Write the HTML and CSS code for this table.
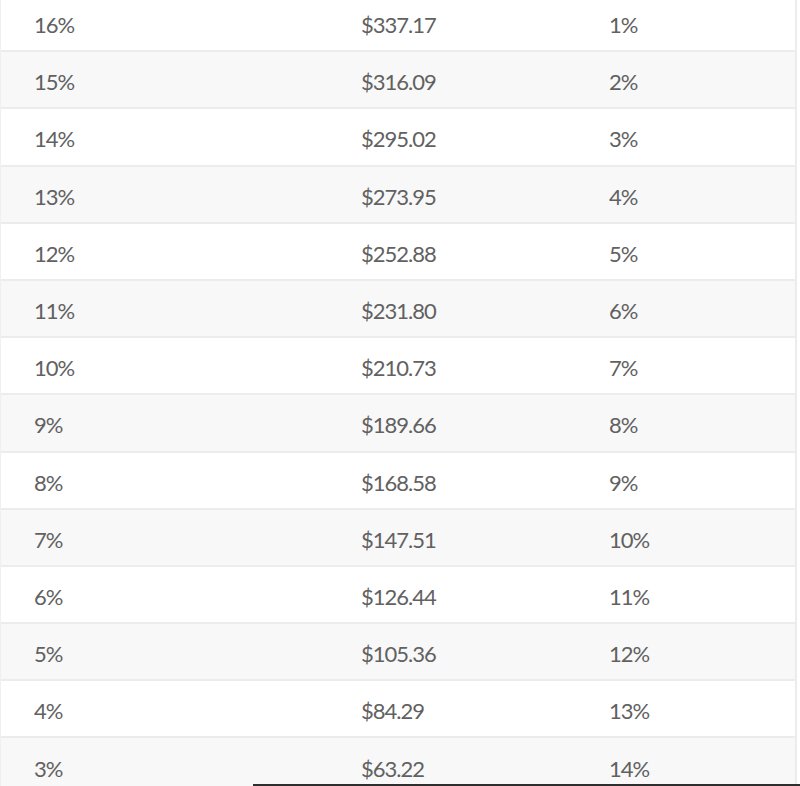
FILE: index.html
```html
<!DOCTYPE html>
<html>
<head>
<meta charset="utf-8">
<link rel="stylesheet" href="styles.css">
</head>
<body>
<div class="table">
  <div class="row"><span class="c1">16%</span><span class="c2">$337.17</span><span class="c3">1%</span></div>
  <div class="row alt"><span class="c1">15%</span><span class="c2">$316.09</span><span class="c3">2%</span></div>
  <div class="row"><span class="c1">14%</span><span class="c2">$295.02</span><span class="c3">3%</span></div>
  <div class="row alt"><span class="c1">13%</span><span class="c2">$273.95</span><span class="c3">4%</span></div>
  <div class="row"><span class="c1">12%</span><span class="c2">$252.88</span><span class="c3">5%</span></div>
  <div class="row alt"><span class="c1">11%</span><span class="c2">$231.80</span><span class="c3">6%</span></div>
  <div class="row"><span class="c1">10%</span><span class="c2">$210.73</span><span class="c3">7%</span></div>
  <div class="row alt"><span class="c1">9%</span><span class="c2">$189.66</span><span class="c3">8%</span></div>
  <div class="row"><span class="c1">8%</span><span class="c2">$168.58</span><span class="c3">9%</span></div>
  <div class="row alt"><span class="c1">7%</span><span class="c2">$147.51</span><span class="c3">10%</span></div>
  <div class="row"><span class="c1">6%</span><span class="c2">$126.44</span><span class="c3">11%</span></div>
  <div class="row alt"><span class="c1">5%</span><span class="c2">$105.36</span><span class="c3">12%</span></div>
  <div class="row"><span class="c1">4%</span><span class="c2">$84.29</span><span class="c3">13%</span></div>
  <div class="row alt"><span class="c1">3%</span><span class="c2">$63.22</span><span class="c3">14%</span></div>
</div>
<div class="edge"></div>
</body>
</html>
```
FILE: styles.css
```css
html, body {
  margin: 0;
  padding: 0;
  background: #ffffff;
  overflow: hidden;
  height: 786px;
}
body {
  position: relative;
  font-family: Lato, "Open Sans", sans-serif;
  color: #616161;
}
.table {
  margin-top: -5px;
  width: 797px;
  border-left: 1px solid #f0f0f0;
  border-right: 2px solid #ececec;
  box-sizing: border-box;
}
.row {
  display: flex;
  align-items: center;
  height: 57.2px;
  box-sizing: border-box;
  border-bottom: 2px solid #ececec;
  background: #ffffff;
  font-size: 22px;
  letter-spacing: -1px;
  padding-top: 4px;
}
.row.alt {
  background: #f8f8f8;
}
.c1 {
  width: 327px;
  padding-left: 33px;
  box-sizing: content-box;
}
.c2 {
  width: 248px;
}
.c3 {
  flex: 1;
}
.edge {
  position: absolute;
  left: 253px;
  right: 0;
  bottom: 0;
  height: 2px;
  background: #2e2e2e;
}
```
